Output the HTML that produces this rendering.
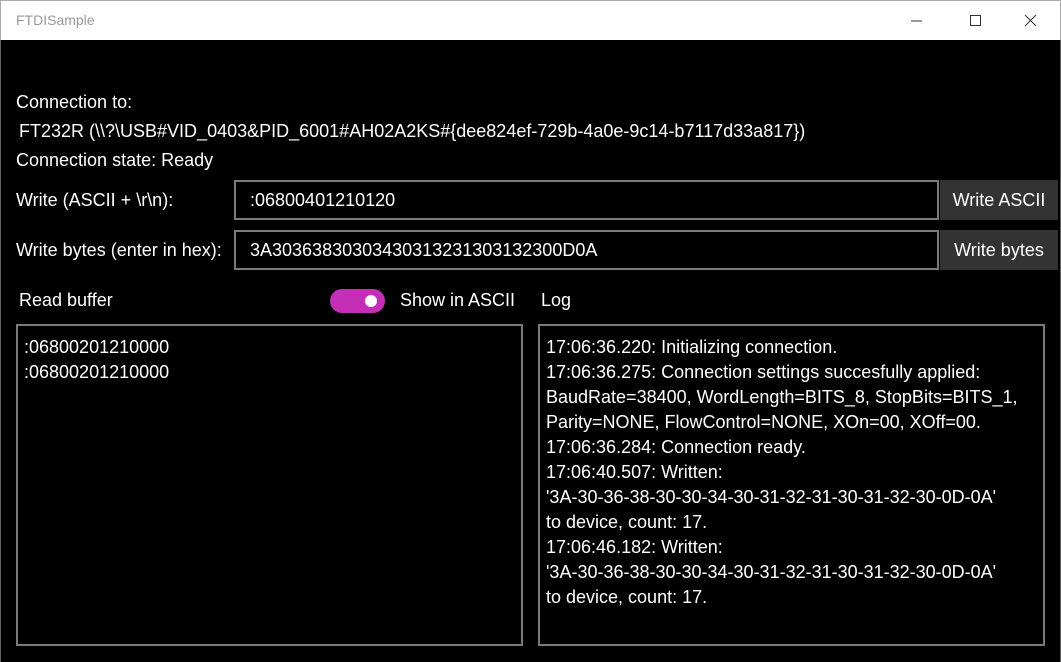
<!DOCTYPE html>
<html><head><style>
*{margin:0;padding:0;box-sizing:border-box}
body{width:1061px;height:662px;background:#000;font-family:"Liberation Sans",sans-serif;color:#fff;position:relative;overflow:hidden;font-size:18px;letter-spacing:0}
.tb{position:absolute;left:0;top:0;width:1061px;height:40px;background:#fff;border-top:1px solid #aaa;border-left:1px solid #aaa;border-right:1px solid #aaa;letter-spacing:0}
.tb span{position:absolute;left:15px;top:11px;color:#999;font-size:14px}
.a{position:absolute;white-space:nowrap}
.box{position:absolute;border:2px solid #7a7a7a}
.btn{position:absolute;background:#333;text-align:center;line-height:40px}
.side{position:absolute;top:40px;width:1px;height:622px;background:#666}
</style></head><body>
<div class="tb"><span>FTDISample</span>
<svg style="position:absolute;left:880px;top:10px" width="170" height="20">
<line x1="30" y1="10" x2="41" y2="10" stroke="#333" stroke-width="1"/>
<rect x="89.5" y="4.5" width="10" height="10" fill="none" stroke="#333"/>
<path d="M144 4L155 15M155 4L144 15" stroke="#333" stroke-width="1"/></svg></div>
<div class="side" style="left:0"></div><div class="side" style="left:1060px"></div>
<div class="a" style="left:16px;top:92px">Connection to:</div>
<div class="a" style="left:19px;top:121px">FT232R (\\?\USB#VID_0403&amp;PID_6001#AH02A2KS#{dee824ef-729b-4a0e-9c14-b7117d33a817})</div>
<div class="a" style="left:16px;top:150px">Connection state: Ready</div>
<div class="a" style="left:16px;top:190px">Write (ASCII + \r\n):</div>
<div class="box" style="left:234px;top:180px;width:705px;height:40px"></div>
<div class="a" style="left:250px;top:190px">:06800401210120</div>
<div class="btn" style="left:940px;top:180px;width:118px;height:40px">Write ASCII</div>
<div class="a" style="left:16px;top:240px">Write bytes (enter in hex):</div>
<div class="box" style="left:234px;top:230px;width:705px;height:40px"></div>
<div class="a" style="left:250px;top:240px">3A30363830303430313231303132300D0A</div>
<div class="btn" style="left:940px;top:230px;width:118px;height:40px">Write bytes</div>
<div class="a" style="left:19px;top:290px">Read buffer</div>
<div style="position:absolute;left:330px;top:289px;width:55px;height:24px;border-radius:12px;background:#c42fb6"><div style="position:absolute;left:35px;top:6px;width:12px;height:12px;border-radius:6px;background:#fff"></div></div>
<div class="a" style="left:400px;top:290px">Show in ASCII</div>
<div class="a" style="left:541px;top:290px">Log</div>
<div class="box" style="left:16px;top:324px;width:507px;height:322px"></div>
<div class="a" style="left:24px;top:335px;line-height:25px">:06800201210000<br>:06800201210000</div>
<div class="box" style="left:538px;top:324px;width:507px;height:322px"></div>
<div class="a" style="left:546px;top:335px;line-height:25px">17:06:36.220: Initializing connection.<br>17:06:36.275: Connection settings succesfully applied:<br>BaudRate=38400, WordLength=BITS_8, StopBits=BITS_1,<br>Parity=NONE, FlowControl=NONE, XOn=00, XOff=00.<br>17:06:36.284: Connection ready.<br>17:06:40.507: Written:<br>'3A-30-36-38-30-30-34-30-31-32-31-30-31-32-30-0D-0A'<br>to device, count: 17.<br>17:06:46.182: Written:<br>'3A-30-36-38-30-30-34-30-31-32-31-30-31-32-30-0D-0A'<br>to device, count: 17.</div>
</body></html>
